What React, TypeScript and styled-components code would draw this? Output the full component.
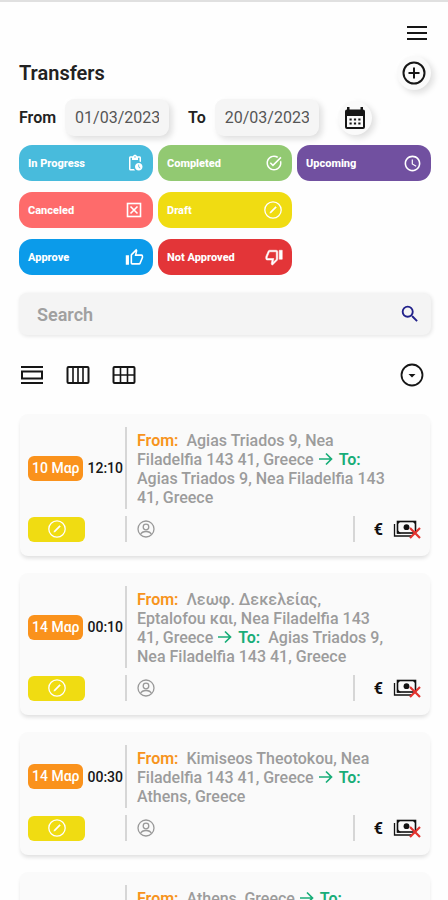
import React from "react";
import styled, { createGlobalStyle } from "styled-components";
import { MdOutlinePendingActions, MdTaskAlt, MdSchedule, MdSearch } from "react-icons/md";

const GlobalStyle = createGlobalStyle`
  * { box-sizing: border-box; }
  body { margin: 0; background: #fefefe; font-family: Roboto, "Noto Sans", sans-serif; color: #222; }
  button, input { font: inherit; color: inherit; }
`;

const Page = styled.main`
  height: 100vh;
  overflow-y: auto;
  scrollbar-width: none;
  border-top: 2px solid #e0e0e0;
  padding: 10px 17px 24px 19px;
`;

const TopBar = styled.header`
  display: flex;
  justify-content: flex-end;
  align-items: center;
  height: 42px;
`;

const IconButton = styled.button`
  display: flex;
  align-items: center;
  justify-content: center;
  padding: 0;
  border: 0;
  background: none;
  color: #161616;
  cursor: pointer;
  svg { display: block; }
`;

const MenuButton = styled(IconButton)`
  width: 28px;
  height: 28px;
`;

const RoundButton = styled(IconButton)`
  width: 34px;
  height: 34px;
  border-radius: 50%;
  background: #fafafa;
  box-shadow: 3px 3px 6px #dedede, -2px -2px 5px #fff;
`;

const TitleRow = styled.div`
  display: flex;
  justify-content: space-between;
  align-items: center;
  height: 38px;
`;

const Title = styled.h1`
  margin: 0;
  font-size: 20px;
  line-height: 24px;
  font-weight: 600;
`;

const DateRow = styled.form`
  display: flex;
  align-items: center;
  margin-top: 7px;
`;

const DateLabel = styled.label`
  display: flex;
  align-items: center;
  gap: 9px;
  margin-right: 19px;
  font-size: 16px;
  font-weight: 600;
`;

const DateInput = styled.input`
  width: 104px;
  height: 37px;
  padding: 0 10px;
  border: 0;
  border-radius: 9px;
  background: #f5f5f5;
  box-shadow: 3px 3px 6px #dedede, -2px -2px 4px #fff;
  color: #555;
  font-size: 16px;
  font-weight: 400;
`;

const StatusGrid = styled.div`
  display: grid;
  grid-template-columns: repeat(3, 1fr);
  gap: 11px 5px;
  margin-top: 9px;
`;

const StatusButton = styled.button<{ $color: string; $first?: boolean }>`
  display: flex;
  align-items: center;
  justify-content: space-between;
  height: 36px;
  padding: 0 9px;
  border: 0;
  border-radius: 13px;
  background: ${(p) => p.$color};
  color: #fff;
  font-size: 11px;
  font-weight: 800;
  cursor: pointer;
  ${(p) => p.$first && "grid-column-start: 1;"}
  svg { display: block; }
`;

const SearchBox = styled.label`
  display: flex;
  align-items: center;
  height: 42px;
  margin-top: 18px;
  padding: 0 10px 0 18px;
  border-radius: 8px;
  background: #f4f4f4;
  box-shadow: 1px 1px 4px #e2e2e2;
  color: #21218a;
`;

const SearchInput = styled.input`
  flex: 1;
  min-width: 0;
  border: 0;
  outline: 0;
  padding: 0;
  background: transparent;
  color: #444;
  font-size: 18px;
  font-weight: 600;
  &::placeholder { color: #a0a0a0; opacity: 1; }
`;

const ViewBar = styled.div`
  display: flex;
  align-items: center;
  gap: 22px;
  height: 30px;
  margin-top: 25px;
  padding-left: 1px;
`;

const SortButton = styled(IconButton)`
  margin-left: auto;
  margin-right: 7px;
`;

const CardList = styled.div`
  display: flex;
  flex-direction: column;
  gap: 17px;
  margin: 24px 1px 0;
`;

const Card = styled.article`
  display: grid;
  grid-template-columns: 97px 1fr;
  row-gap: 7px;
  padding: 13px 9px 14px 8px;
  border-radius: 8px;
  background: #fafafa;
  box-shadow: 0 3px 4px -1px #dcdcdc;
`;

const When = styled.div`
  display: flex;
  align-items: center;
  gap: 4px;
  color: #161616;
  font-size: 14px;
  font-weight: 500;
  white-space: nowrap;
`;

const DateBadge = styled.span`
  padding: 0 4px;
  border-radius: 6px;
  background: #fa921c;
  color: #fff;
  line-height: 25px;
`;

const Route = styled.p`
  margin: 0;
  padding: 4px 32px 2px 10px;
  border-left: 2px solid #d6d6d6;
  color: #9c9c9c;
  font-size: 16px;
  line-height: 19px;
  font-weight: 500;
  svg { margin-right: 2px; vertical-align: -1px; color: #18ad78; }
`;

const Mark = styled.span<{ $color: string }>`
  margin-right: 4px;
  color: ${(p) => p.$color};
  font-weight: 600;
`;

const DraftBadge = styled.span`
  display: flex;
  align-items: center;
  justify-content: center;
  align-self: center;
  width: 57px;
  height: 25px;
  border-radius: 6px;
  background: #f0dc12;
  color: #fff;
`;

const Footer = styled.div`
  display: flex;
  align-items: center;
  height: 26px;
  padding-left: 10px;
  border-left: 2px solid #d6d6d6;
  color: #999;
`;

const Payment = styled.div`
  display: flex;
  align-items: center;
  gap: 10px;
  height: 26px;
  margin-left: auto;
  padding-left: 19px;
  border-left: 2px solid #d6d6d6;
  color: #111;
  font-size: 16px;
  font-weight: 700;
`;

const stroke = { fill: "none", stroke: "currentColor" };

const MenuIcon = () => (
  <svg width="22" height="16" viewBox="0 0 22 16" {...stroke} strokeWidth="2">
    <path d="M1 2h20M1 8h20M1 14h20" />
  </svg>
);

const PlusIcon = () => (
  <svg width="24" height="24" viewBox="0 0 24 24" {...stroke} strokeWidth="2">
    <circle cx="12" cy="12" r="10.5" />
    <path d="M12 6.5v11M6.5 12h11" />
  </svg>
);

const CalendarIcon = () => (
  <svg width="22" height="24" viewBox="0 0 22 24">
    <path
      fill="currentColor"
      fillRule="evenodd"
      d="M3 1h2.5v2.5h11V1H19v2.500a2 2 0 0 1 2 2V21a2 2 0 0 1-2 2H3a2 2 0 0 1-2-2V5.500a2 2 0 0 1 2-2zM3 10v11h16V10z"
    />
    <path d="M5.500 13.500h11.500M5.500 17.500h11.500" stroke="currentColor" strokeWidth="2.200" strokeDasharray="2.200 2.200" />
  </svg>
);

const DraftIcon = () => (
  <svg width="20" height="20" viewBox="0 0 20 20" {...stroke} strokeWidth="1.300">
    <circle cx="10" cy="10" r="8.200" />
    <path d="M6.800 13.200l.5-1.500 5.200-5.200 1 1-5.200 5.200z" fill="currentColor" strokeWidth=".4" />
  </svg>
);

const CanceledIcon = () => (
  <svg width="18" height="16" viewBox="0 0 18 16" {...stroke} strokeWidth="1.600">
    <rect x="1.500" y="1.500" width="13" height="13" />
    <path d="M4.500 4.500l7 7M11.500 4.500l-7 7" />
  </svg>
);

const ThumbUpIcon = () => (
  <svg width="19" height="19" viewBox="0 0 24 24" fill="currentColor">
    <path d="M5 9v12H1V9h4m4 12a2 2 0 0 1-2-2V9c0-.55.22-1.050.59-1.410L14.170 1l1.060 1.060c.27.27.44.64.44 1.050l-.03.32L14.690 8H21a2 2 0 0 1 2 2v2c0 .26-.05.5-.14.73l-3.020 7.050C19.540 20.500 18.830 21 18 21H9m0-2h9.030L21 12v-2h-8.790l1.130-5.320L9 9.030V19z" />
  </svg>
);

const ThumbDownIcon = () => (
  <svg width="18" height="18" viewBox="0 0 24 24" fill="currentColor">
    <path d="M19 15V3h4v12h-4M15 3a2 2 0 0 1 2 2v10c0 .55-.22 1.050-.59 1.410L9.830 23l-1.060-1.060c-.27-.27-.44-.64-.44-1.060l.03-.31.950-4.570H3a2 2 0 0 1-2-2v-2c0-.26.05-.5.14-.73l3.020-7.050C4.460 3.500 5.170 3 6 3h9m0 2H5.970L3 12v2h8.780l-1.130 5.320L15 14.970V5z" stroke="currentColor" strokeWidth=".7" />
  </svg>
);

const RowsIcon = () => (
  <svg width="24" height="20" viewBox="0 0 24 20" {...stroke} strokeWidth="2">
    <path d="M1 2h22M1 18h22" />
    <rect x="2" y="6.500" width="20" height="7" />
  </svg>
);

const ColumnsIcon = () => (
  <svg width="24" height="20" viewBox="0 0 24 20" {...stroke} strokeWidth="2">
    <rect x="1.500" y="2" width="21" height="16" rx="1" />
    <path d="M7 2v16M12 2v16M17 2v16" strokeWidth="1.600" />
  </svg>
);

const GridIcon = () => (
  <svg width="24" height="20" viewBox="0 0 24 20" {...stroke} strokeWidth="2">
    <rect x="1.500" y="2" width="21" height="16" rx="1" />
    <path d="M8.500 2v16M15.500 2v16M2 10h20" strokeWidth="1.600" />
  </svg>
);

const SortIcon = () => (
  <svg width="24" height="24" viewBox="0 0 24 24" {...stroke} strokeWidth="1.800">
    <circle cx="12" cy="12" r="10.500" />
    <path d="M8.500 11h7L12 14.500z" fill="currentColor" stroke="none" />
  </svg>
);

const ArrowIcon = () => (
  <svg width="15" height="14" viewBox="0 0 15 14" {...stroke} strokeWidth="1.700">
    <path d="M1 7h12M8 1.500L13.500 7 8 12.500" />
  </svg>
);

const PersonIcon = () => (
  <svg width="18" height="18" viewBox="0 0 18 18" {...stroke} strokeWidth="1.300">
    <circle cx="9" cy="9" r="8" />
    <circle cx="9" cy="7" r="2.800" />
    <path d="M3.500 14.500c1-2.300 3-3 5.500-3s4.500.7 5.500 3" />
  </svg>
);

const UnpaidIcon = () => (
  <svg width="28" height="20" viewBox="0 0 28 20" {...stroke}>
    <path d="M1.500 5v12H19" strokeWidth="1.300" />
    <rect x="4.500" y="2.500" width="18" height="11.500" strokeWidth="1.600" />
    <circle cx="13.500" cy="8.200" r="2.900" fill="currentColor" stroke="none" />
    <path d="M4 2h4L4 6zM23 2h-4l4 4zM4 14.500h4l-4-4z" fill="currentColor" stroke="none" />
    <path d="M17 9l10 10M27 9L17 19" stroke="#e3342f" strokeWidth="2.200" />
  </svg>
);

const statuses = [
  { label: "In Progress", color: "#48bbdc", icon: <MdOutlinePendingActions size={18} /> },
  { label: "Completed", color: "#92c972", icon: <MdTaskAlt size={18} /> },
  { label: "Upcoming", color: "#7150a0", icon: <MdSchedule size={19} /> },
  { label: "Canceled", color: "#fe6b6b", icon: <CanceledIcon /> },
  { label: "Draft", color: "#f0dc12", icon: <DraftIcon /> },
  { label: "Approve", color: "#0b9bea", icon: <ThumbUpIcon />, first: true },
  { label: "Not Approved", color: "#e33538", icon: <ThumbDownIcon /> },
];

const transfers = [
  { date: "10 Μαρ", time: "12:10", from: "Agias Triados 9, Nea Filadelfia 143 41, Greece", to: "Agias Triados 9, Nea Filadelfia 143 41, Greece" },
  { date: "14 Μαρ", time: "00:10", from: "Λεωφ. Δεκελείας, Eptalofou και, Nea Filadelfia 143 41, Greece", to: "Agias Triados 9, Nea Filadelfia 143 41, Greece" },
  { date: "14 Μαρ", time: "00:30", from: "Kimiseos Theotokou, Nea Filadelfia 143 41, Greece", to: "Athens, Greece" },
  { date: "14 Μαρ", time: "01:00", from: "Athens, Greece", to: "Kimiseos Theotokou, Nea Filadelfia 143 41, Greece" },
];

export default function App() {
  return (
    <>
      <GlobalStyle />
      <Page>
        <TopBar>
          <MenuButton aria-label="Menu"><MenuIcon /></MenuButton>
        </TopBar>
        <TitleRow>
          <Title>Transfers</Title>
          <RoundButton aria-label="Add transfer"><PlusIcon /></RoundButton>
        </TitleRow>
        <DateRow>
          <DateLabel>From<DateInput defaultValue="01/03/2023" /></DateLabel>
          <DateLabel>To<DateInput defaultValue="20/03/2023" /></DateLabel>
          <RoundButton type="button" aria-label="Pick dates"><CalendarIcon /></RoundButton>
        </DateRow>
        <StatusGrid>
          {statuses.map((s) => (
            <StatusButton key={s.label} $color={s.color} $first={s.first}>
              {s.label}
              {s.icon}
            </StatusButton>
          ))}
        </StatusGrid>
        <SearchBox>
          <SearchInput type="search" placeholder="Search" aria-label="Search" />
          <MdSearch size={22} />
        </SearchBox>
        <ViewBar>
          <IconButton aria-label="Row view"><RowsIcon /></IconButton>
          <IconButton aria-label="Column view"><ColumnsIcon /></IconButton>
          <IconButton aria-label="Grid view"><GridIcon /></IconButton>
          <SortButton aria-label="More options"><SortIcon /></SortButton>
        </ViewBar>
        <CardList>
          {transfers.map((t) => (
            <Card key={t.date + t.time}>
              <When><DateBadge>{t.date}</DateBadge>{t.time}</When>
              <Route>
                <Mark $color="#f7941d">From:</Mark> {t.from} <ArrowIcon /> <Mark $color="#18ad78">To:</Mark> {t.to}
              </Route>
              <DraftBadge role="img" aria-label="Draft"><DraftIcon /></DraftBadge>
              <Footer>
                <PersonIcon />
                <Payment>€<UnpaidIcon /></Payment>
              </Footer>
            </Card>
          ))}
        </CardList>
      </Page>
    </>
  );
}
